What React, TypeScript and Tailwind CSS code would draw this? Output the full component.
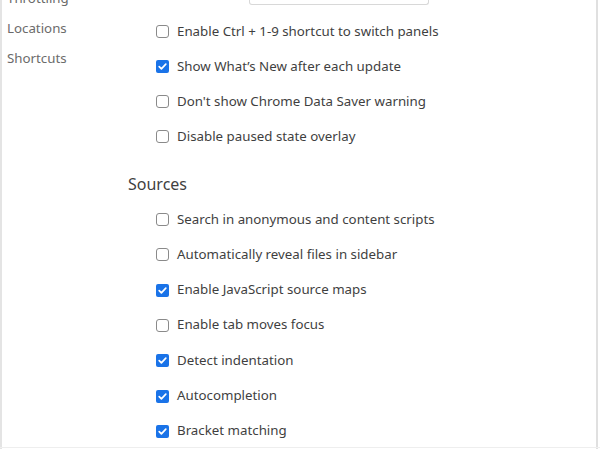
import React from 'react';

const font = { fontFamily: '"Segoe UI", "Noto Sans", sans-serif' };

function Box({ checked }: { checked: boolean }) {
    if (checked) {
        return (
            <span className="w-[13px] h-[13px] rounded-[2px] bg-[#1a73e8] flex items-center justify-center shrink-0">
                <svg width="11" height="11" viewBox="0 0 11 11" fill="none">
                    <path d="M2.2 5.6 L4.4 7.8 L8.8 3.2" stroke="white" strokeWidth="1.7" strokeLinecap="round" strokeLinejoin="round" />
                </svg>
            </span>
        );
    }
    return <span className="w-[13px] h-[13px] rounded-[3px] border border-[#8a8a8a] bg-white shrink-0" />;
}

function Row({ label, checked = false, tall = false }: { label: string; checked?: boolean; tall?: boolean }) {
    return (
        <div className={`${tall ? 'h-[35.3px]' : 'h-[35px]'} flex items-center gap-[8px] pl-[28px]`}>
            <Box checked={checked} />
            <span className="text-[13.3px] text-[#3f3f3f] whitespace-nowrap">{label}</span>
        </div>
    );
}

export default function App() {
    return (
        <div className="w-[600px] h-[449px] overflow-hidden bg-white relative flex" style={font}>
            <div className="w-[128px] shrink-0 border-l-2 border-[#e4e4e4] pl-[5px] -mt-[16px]">
                {['Throttling', 'Locations', 'Shortcuts'].map((t) => (
                    <div key={t} className="h-[30px] flex items-center text-[13.3px] text-[#6b6b6b]">{t}</div>
                ))}
            </div>
            <div className="flex-1 flex flex-col">
                <div className="ml-[121px] w-[180px] h-[5px] border border-t-0 border-[#d8d8d8] rounded-b-[3px]" />
                <div className="mt-[9px]">
                    <Row label="Enable Ctrl + 1-9 shortcut to switch panels" />
                    <Row label="Show What’s New after each update" checked />
                    <Row label="Don't show Chrome Data Saver warning" />
                    <Row label="Disable paused state overlay" />
                </div>
                <div className="h-[30px] mt-[15px] flex items-center text-[16px] text-[#3f3f3f]">Sources</div>
                <div className="mt-[3px]">
                    <Row tall label="Search in anonymous and content scripts" />
                    <Row tall label="Automatically reveal files in sidebar" />
                    <Row tall label="Enable JavaScript source maps" checked />
                    <Row tall label="Enable tab moves focus" />
                    <Row tall label="Detect indentation" checked />
                    <Row tall label="Autocompletion" checked />
                    <Row tall label="Bracket matching" checked />
                </div>
            </div>
            <div className="absolute right-[2px] top-0 bottom-0 w-[2px] bg-[#e0e0e0]" />
            <div className="absolute left-0 right-0 bottom-[1px] h-[1px] bg-[#eeeeee]" />
        </div>
    );
}
